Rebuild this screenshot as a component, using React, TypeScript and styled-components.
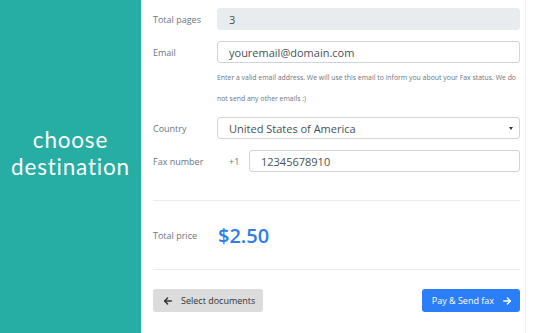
import React from 'react';
import styled, {createGlobalStyle} from 'styled-components';

const GlobalStyle = createGlobalStyle`
  html, body { margin: 0; padding: 0; background: #fff; }
  body { font-family: "Open Sans", "Noto Sans", sans-serif; }
  * { box-sizing: border-box; }
`;

const Page = styled.div`
  display: flex;
  width: 533px;
  height: 333px;
  overflow: hidden;
`;

const Side = styled.aside`
  width: 141px;
  flex-shrink: 0;
  background: #26ada4;
  display: flex;
  align-items: center;
  justify-content: center;
  padding-bottom: 28px;
  color: #fff;
  font-family: Lato, "Open Sans", sans-serif;
  font-size: 22.5px;
  line-height: 27px;
  text-align: center;
  letter-spacing: 0.8px;
`;

const Main = styled.main`
  flex: 1;
  padding: 8px 5px 0 12px;
  border-right: 1px solid #f1f1f1;
  margin-right: 7px;
`;

const Row = styled.div<{gap?: number}>`
  display: flex;
  align-items: center;
  margin-bottom: ${p => p.gap ?? 11}px;
`;

const Label = styled.div<{center?: boolean}>`
  width: 64px;
  flex-shrink: 0;
  font-size: 9px;
  color: #6c757d;
  align-self: ${p => p.center ? 'center' : 'flex-start'};
  padding-top: ${p => p.center ? 0 : 5}px;
`;

const Field = styled.div<{readOnly?: boolean}>`
  flex: 1;
  height: 22px;
  display: flex;
  align-items: center;
  padding: 0 11px;
  font-size: 11px;
  color: #495057;
  border: 1px solid ${p => p.readOnly ? '#e9ecef' : '#ced4da'};
  background: ${p => p.readOnly ? '#e9ecef' : '#fff'};
  border-radius: 3px;
`;

const Select = styled(Field)`
  justify-content: space-between;
  padding-right: 6px;
  &::after {
    content: '';
    border-left: 2.5px solid transparent;
    border-right: 2.5px solid transparent;
    border-top: 3.5px solid #333;
  }
`;

const Prefix = styled.div`
  width: 32px;
  font-size: 9px;
  color: #6c757d;
  padding-left: 12px;
  flex-shrink: 0;
`;

const Help = styled.p`
  margin: 4px 0 8px 64px;
  font-size: 6.9px;
  line-height: 21px;
  color: #6c757d;
`;

const Divider = styled.hr`
  border: none;
  border-top: 1px solid #ececec;
  margin: 0;
`;

const PriceRow = styled.div`
  display: flex;
  align-items: center;
  height: 68px;
`;

const Price = styled.div`
  font-size: 20px;
  font-weight: 600;
  color: #2f7ee6;
  margin-left: 1px;
`;

const Actions = styled.div`
  display: flex;
  justify-content: space-between;
  margin-top: 19px;
`;

const Button = styled.button<{primary?: boolean}>`
  height: 23px;
  display: flex;
  align-items: center;
  gap: 8px;
  padding: 0 8px 0 10px;
  border: none;
  border-radius: 3px;
  font-family: inherit;
  font-size: 9px;
  background: ${p => p.primary ? '#2b7ef8' : '#dcdcdc'};
  color: ${p => p.primary ? '#fff' : '#333'};
`;

const Arrow = ({left}: {left?: boolean}) => (
  <svg width="10" height="10" viewBox="0 0 24 24" fill="none" stroke="currentColor" strokeWidth="3.5"
       strokeLinecap="round" strokeLinejoin="round">
    {left
      ? <><path d="M20 12H4"/><path d="M11 5l-7 7 7 7"/></>
      : <><path d="M4 12h16"/><path d="M13 5l7 7-7 7"/></>}
  </svg>
);

export default function App() {
  return (
    <Page>
      <GlobalStyle/>
      <Side>choose<br/>destination</Side>
      <Main>
        <Row>
          <Label>Total pages</Label>
          <Field readOnly>3</Field>
        </Row>
        <Row gap={0}>
          <Label>Email</Label>
          <Field>youremail@domain.com</Field>
        </Row>
        <Help>
          Enter a valid email address. We will use this email to inform you about your Fax status. We do
          not send any other emails :)
        </Help>
        <Row>
          <Label>Country</Label>
          <Select>United States of America</Select>
        </Row>
        <Row gap={28}>
          <Label>Fax number</Label>
          <Prefix>+1</Prefix>
          <Field>12345678910</Field>
        </Row>
        <Divider/>
        <PriceRow>
          <Label center>Total price</Label>
          <Price>$2.50</Price>
        </PriceRow>
        <Divider/>
        <Actions>
          <Button><Arrow left/>Select documents</Button>
          <Button primary>Pay &amp; Send fax<Arrow/></Button>
        </Actions>
      </Main>
    </Page>
  );
}
